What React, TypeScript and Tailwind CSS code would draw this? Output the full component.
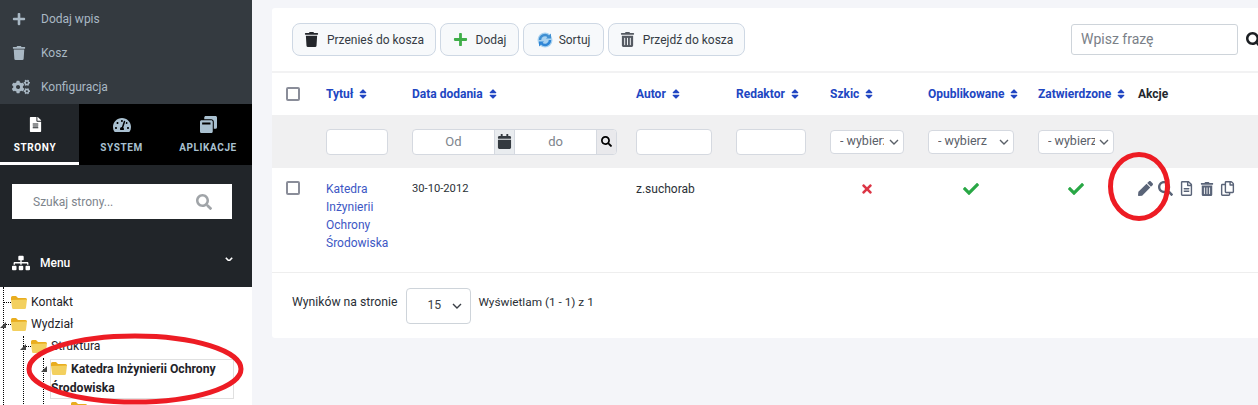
import React from "react";
import {
  FaPlus, FaTrash, FaCogs, FaFileAlt, FaTachometerAlt, FaSitemap, FaSearch, FaCalendar, FaPen,
  FaRegFileAlt, FaRegCopy, FaSort, FaTimes, FaCheck, FaTrashAlt, FaWindowRestore,
} from "react-icons/fa";

const font = "font-['Roboto','Liberation_Sans',sans-serif]";

function Folder({ className }: { className?: string }) {
  return (
    <svg viewBox="0 0 16 14" width="16" height="14" className={className}>
      <path d="M0 2.5 Q0 1 1.5 1 H5 L7 3 H14.5 Q16 3 16 4.5 V5 H0 Z" fill="#e9ad1f" />
      <path d="M0 5 L16 4.5 L15 12.5 Q15 14 13.5 14 H2.5 Q1 14 1 12.5 Z" fill="#f3d05f" />
    </svg>
  );
}

function Chev({ className, w = 10, sw = 1.4 }: { className?: string; w?: number; sw?: number }) {
  return (
    <svg viewBox="0 0 10 6" width={w} height={(w * 6) / 10} fill="none" stroke="currentColor" strokeWidth={sw} className={className}>
      <path d="M1 1 L5 5 L9 1" />
    </svg>
  );
}

function SortIcon() {
  return (
    <svg viewBox="0 0 16 16" width="16" height="16" fill="none" className="mr-[-2px]">
      <circle cx="8" cy="8" r="7.5" fill="#a9d2f0" />
      <path d="M3 8 A5 5 0 0 1 11.5 4.5" stroke="#3f8fd2" strokeWidth="2.4" />
      <path d="M13 8 A5 5 0 0 1 4.5 11.5" stroke="#2f86d6" strokeWidth="2.4" />
      <path d="M9 6.5 H14 V1.5 Z" fill="#3f8fd2" />
      <path d="M7 9.5 H2 V14.5 Z" fill="#2f86d6" />
    </svg>
  );
}

function SideItem({ icon, label }: { icon: React.ReactNode; label: string }) {
  return (
    <div className="flex h-[34px] items-center text-[#a9b8c4]">
      <div className="flex w-[41px] justify-start pl-3 text-[14px]">{icon}</div>
      <span className="text-[12px]">{label}</span>
    </div>
  );
}

function Tab({ icon, label, active, w }: { icon: React.ReactNode; label: string; active?: boolean; w: string }) {
  return (
    <div className={`flex flex-col items-center ${w} h-[61px] pt-[11px] ${active ? "border-b-[3px] border-white bg-[#212529] pr-[9px] text-white" : "text-[#a9c0d0]"}`}>
      <div className="flex h-[19px] items-center text-[15px]">{icon}</div>
      <span className="mt-[6px] text-[10px] font-bold tracking-[0.6px]">{label}</span>
    </div>
  );
}

function Btn({ icon, label, w }: { icon: React.ReactNode; label: string; w: string }) {
  return (
    <div className={`flex h-[33px] ${w} items-center justify-center gap-[8px] rounded-[8px] border border-[#ced8e4] bg-[#f7f9fb] text-[12px] text-[#353b44]`}>
      {icon}
      <span>{label}</span>
    </div>
  );
}

function Head({ label, w }: { label: string; w: string }) {
  return (
    <div className={`${w} flex shrink-0 items-center gap-[4px] text-[12px] font-bold text-[#2146c2]`}>
      <span>{label}</span>
      <FaSort className="text-[12px]" />
    </div>
  );
}

function Sel({ label, w, cellW, textW }: { label: string; w: string; cellW: string; textW: string }) {
  return (
    <div className={`${cellW} shrink-0`}>
      <div className={`${w} flex h-[24px] items-center justify-between rounded-[4px] border border-[#d5d9e0] bg-white pl-[9px] pr-[4px] text-[12.5px] text-[#5a6068]`}>
        <span className={`${textW} overflow-hidden whitespace-nowrap`}>{label}</span>
        <Chev className="shrink-0" />
      </div>
    </div>
  );
}

function Inp({ w, cellW }: { w: string; cellW: string }) {
  return (
    <div className={`${cellW} shrink-0`}>
      <div className={`${w} h-[26px] rounded-[4px] border border-[#d5d9e0] bg-white`} />
    </div>
  );
}

function Box() {
  return <div className="h-[14px] w-[14px] rounded-[2px] border-2 border-[#8a8d99] bg-white" />;
}

function TreeRow({ label, indent, toggle }: { label: string; indent: string; toggle?: boolean }) {
  return (
    <div className={`flex h-[22px] items-center ${indent} text-[12.2px] text-[#1f2328]`}>
      <div className="relative mr-[4px] flex w-[16px] justify-center">
        <Folder />
        <div className="absolute left-[-8px] top-[7px] w-[8px] border-t border-dotted border-black" />
        {toggle && <div className="absolute left-[-11px] top-[5px] h-0 w-0 border-b-[6px] border-l-[6px] border-b-[#444] border-l-transparent" />}
      </div>
      <span>{label}</span>
    </div>
  );
}

export default function App() {
  return (
    <div className={`${font} relative flex h-[405px] w-[1258px] overflow-hidden bg-[#f4f5f9]`}>
      <aside className="flex h-[405px] w-[252px] shrink-0 flex-col overflow-hidden bg-white">
        <div className="h-[104px] shrink-0 bg-[#343a40] pt-[2px]">
          <SideItem icon={<FaPlus />} label="Dodaj wpis" />
          <SideItem icon={<FaTrash />} label="Kosz" />
          <SideItem icon={<FaCogs className="text-[18px]" />} label="Konfiguracja" />
        </div>
        <div className="flex h-[61px] shrink-0 bg-black">
          <Tab icon={<FaFileAlt />} label="STRONY" active w="w-[79px]" />
          <Tab icon={<FaTachometerAlt className="text-[18px]" />} label="SYSTEM" w="w-[85px]" />
          <Tab icon={<FaWindowRestore className="text-[17px]" />} label="APLIKACJE" w="w-[88px]" />
        </div>
        <div className="h-[122px] shrink-0 bg-[#212529] pl-3 pr-[19px] pt-[19px]">
          <div className="flex h-[35px] w-[220px] items-center justify-between bg-white pl-[21px] pr-[20px] text-[12px] text-[#7d848c]">
            <span>Szukaj strony...</span>
            <FaSearch className="text-[16px] text-[#a0a4a8]" />
          </div>
          <div className="mt-[35px] flex items-center text-white">
            <FaSitemap className="mr-[10px] text-[18px]" />
            <span className="text-[12px] font-medium">Menu</span>
            <Chev w={8} sw={2} className="relative top-[-4px] ml-auto" />
          </div>
        </div>
        <div className="relative flex-1 pt-[4px]">
          <div className="absolute left-[3px] top-0 h-full border-l border-dotted border-black" />
          <div className="absolute left-[23px] top-[49px] h-full border-l border-dotted border-black" />
          <div className="absolute left-[43px] top-[71px] h-full border-l border-dotted border-black" />
          <TreeRow label="Kontakt" indent="pl-[11px]" />
          <TreeRow label="Wydział" indent="pl-[11px]" toggle />
          <TreeRow label="Struktura" indent="pl-[31px]" toggle />
          <div className="relative ml-[50px] mr-[18px] mt-[2px] h-[40px] border border-[#e0e0e0] text-[12.2px] font-bold leading-[19px] text-[#1f2328]">
            <div className="absolute left-[-10px] top-[6px] h-0 w-0 border-b-[6px] border-l-[6px] border-b-[#444] border-l-transparent" />
            <Folder className="mr-[4px] inline-block align-[-2px]" />
            Katedra Inżynierii Ochrony Środowiska
          </div>
          <div className="ml-[71px] mt-[2px]"><Folder /></div>
        </div>
      </aside>

      <main className="ml-[20px] mt-2 h-[330px] w-[986px] shrink-0 rounded-l-[3px] bg-white text-[12px] text-[#2a2f36]">
        <div className="flex h-[63px] items-center pl-5">
          <div className="flex gap-1">
            <Btn w="w-[144px]" icon={<FaTrash className="text-[15px] text-[#23262b]" />} label="Przenieś do kosza" />
            <Btn w="w-[79px]" icon={<FaPlus className="text-[15px] text-[#3fae49]" />} label="Dodaj" />
            <Btn w="w-[81px]" icon={<SortIcon />} label="Sortuj" />
            <Btn w="w-[137px]" icon={<FaTrashAlt className="text-[15px] text-[#555a62]" />} label="Przejdź do kosza" />
          </div>
          <div className="ml-auto mr-[-4px] flex items-center">
            <div className="flex h-[31px] w-[167px] items-center rounded-[3px] border border-[#ced4da] pl-[9px] text-[14px] text-[#7a8088]">Wpisz frazę</div>
            <FaSearch className="ml-2 shrink-0 text-[16px] text-[#1c1f23]" />
          </div>
        </div>
        <div className="flex h-[44px] items-center border-t-2 border-[#f2f2f3]">
          <div className="flex w-[54px] shrink-0 pl-[14px]"><Box /></div>
          <Head w="w-[86px]" label="Tytuł" />
          <Head w="w-[224px]" label="Data dodania" />
          <Head w="w-[100px]" label="Autor" />
          <Head w="w-[94px]" label="Redaktor" />
          <Head w="w-[98px]" label="Szkic" />
          <Head w="w-[110px]" label="Opublikowane" />
          <Head w="w-[100px]" label="Zatwierdzone" />
          <span className="text-[12px] font-bold text-[#23272d]">Akcje</span>
        </div>
        <div className="flex h-[53px] items-center bg-[#f0f0f1]">
          <div className="w-[54px] shrink-0" />
          <Inp w="w-[62px]" cellW="w-[86px]" />
          <div className="w-[224px] shrink-0">
            <div className="flex h-[26px] w-[205px] overflow-hidden rounded-[4px] border border-[#d5d9e0] bg-white text-[13px] text-[#7d848c]">
              <div className="flex w-[81px] items-center justify-center">Od</div>
              <div className="flex w-[21px] items-center justify-center border-x border-[#d5d9e0] bg-[#e9ecef]"><FaCalendar className="text-[15px] text-[#343a40]" /></div>
              <div className="flex w-[81px] items-center justify-center">do</div>
              <div className="flex flex-1 items-center justify-center border-l border-[#d5d9e0] bg-[#e9e9ec]"><FaSearch className="text-[11px] text-black" /></div>
            </div>
          </div>
          <Inp w="w-[76px]" cellW="w-[100px]" />
          <Inp w="w-[70px]" cellW="w-[94px]" />
          <Sel w="w-[74px]" cellW="w-[98px]" textW="w-[44px]" label="- wybierz" />
          <Sel w="w-[86px]" cellW="w-[110px]" textW="w-[60px]" label="- wybierz" />
          <Sel w="w-[76px]" cellW="w-[100px]" textW="w-[47px]" label="- wybierz" />
        </div>
        <div className="flex h-[105px] items-start border-b border-[#eeeeee] pt-[12px]">
          <div className="flex w-[54px] shrink-0 pl-[14px] pt-[1px]"><Box /></div>
          <div className="w-[86px] shrink-0 text-[12px] leading-[18px] text-[#3d57c4]">Katedra<br />Inżynierii<br />Ochrony<br />Środowiska</div>
          <div className="w-[224px] shrink-0 text-[11.2px] leading-[18px]">30-10-2012</div>
          <div className="w-[100px] shrink-0 leading-[18px]">z.suchorab</div>
          <div className="flex w-[94px] shrink-0" />
          <div className="w-[98px] shrink-0 pl-[30px] pt-[2px]"><FaTimes className="text-[14px] text-[#dc3545]" /></div>
          <div className="w-[110px] shrink-0 pl-[35px] pt-[1px]"><FaCheck className="text-[16px] text-[#28a745]" /></div>
          <div className="w-[100px] shrink-0 pl-[30px] pt-[1px]"><FaCheck className="text-[16px] text-[#28a745]" /></div>
          <div className="flex items-center gap-[6px] pt-[1px] text-[15px] text-[#5a6478]">
            <FaPen />
            <FaSearch className="ml-[-1px]" />
            <FaRegFileAlt />
            <FaTrashAlt className="text-[14px]" />
            <FaRegCopy />
          </div>
        </div>
        <div className="flex h-[65px] items-center pl-5 text-[12.2px]">
          <span className="relative top-[-3px]">Wyników na stronie</span>
          <div className="ml-[9px] flex h-[36px] w-[65px] items-center justify-between rounded-[4px] border border-[#ced4da] pl-5 pr-[8px] text-[#3a3f46]">
            <span>15</span>
            <Chev />
          </div>
          <span className="relative top-[-3px] ml-[7px] text-[11.8px]">Wyświetlam (1 - 1) z 1</span>
        </div>
      </main>

      <svg className="pointer-events-none absolute left-0 top-0" width="1258" height="405" fill="none" stroke="#ed1c24" strokeWidth="5">
        <ellipse cx="135" cy="369" rx="106" ry="33" />
        <ellipse cx="1139" cy="186.5" rx="28.5" ry="32" />
      </svg>
    </div>
  );
}
